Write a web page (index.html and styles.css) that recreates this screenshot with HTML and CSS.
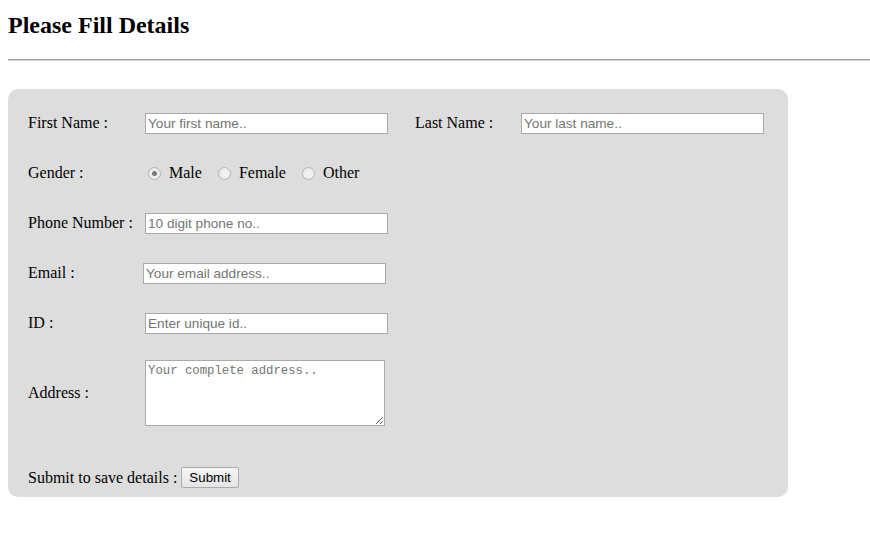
FILE: index.html
```html
<!DOCTYPE html>
<html>
<head>
<meta charset="utf-8">
<title>Please Fill Details</title>
<link rel="stylesheet" href="styles.css">
</head>
<body>
<header class="header">
  <h2 class="title">Please Fill Details</h2>
</header>
<hr class="rule">
<form class="panel">
  <div class="row">
    <label class="label">First Name :</label>
    <input class="field" type="text" placeholder="Your first name..">
    <label class="label label-last">Last Name :</label>
    <input class="field" type="text" placeholder="Your last name..">
  </div>
  <div class="row">
    <label class="label">Gender :</label>
    <div class="radios">
      <input class="radio" type="radio" name="g" checked><span class="rtext">Male</span>
      <input class="radio" type="radio" name="g"><span class="rtext">Female</span>
      <input class="radio" type="radio" name="g"><span class="rtext">Other</span>
    </div>
  </div>
  <div class="row">
    <label class="label">Phone Number :</label>
    <input class="field" type="text" placeholder="10 digit phone no..">
  </div>
  <div class="row">
    <label class="label">Email :</label>
    <input class="field field-email" type="text" placeholder="Your email address..">
  </div>
  <div class="row">
    <label class="label">ID :</label>
    <input class="field" type="text" placeholder="Enter unique id..">
  </div>
  <div class="row row-tall">
    <label class="label">Address :</label>
    <textarea class="area" placeholder="Your complete address.."></textarea>
  </div>
  <div class="row row-submit">
    <span class="submit-label">Submit to save details :</span>
    <button class="btn" type="button">Submit</button>
  </div>
</form>
</body>
</html>
```

FILE: styles.css
```css
body {
  margin: 0;
  font-family: "Liberation Serif", "Times New Roman", serif;
  font-size: 16px;
  color: #000;
  background: #fff;
}

.header {
  padding: 11px 0 0 8px;
}

.title {
  margin: 0;
  font-size: 24px;
  line-height: 28px;
  font-weight: bold;
}

.rule {
  margin: 20px 0 0 8px;
  height: 0;
  border: 0;
  border-top: 1px solid #9a9a9a;
  border-bottom: 1px solid #d8d8d8;
}

.panel {
  margin: 28px 0 0 8px;
  width: 780px;
  height: 408px;
  box-sizing: border-box;
  padding: 9px 0 0 20px;
  background: #dddddd;
  border-radius: 10px;
}

.row {
  display: flex;
  align-items: center;
  height: 50px;
}

.row-tall {
  height: 88px;
  padding-top: 2px;
  box-sizing: border-box;
}

.row-submit {
  margin-top: 22px;
  height: 39px;
}

.label {
  width: 117px;
  flex: none;
}

.label-last {
  width: 106px;
  margin-left: 27px;
}

.field {
  width: 243px;
  height: 21px;
  box-sizing: border-box;
  margin: 0;
  padding: 1px 2px;
  border: 1px solid #a9a9a9;
  background: #fff;
  font-family: "Liberation Sans", Arial, sans-serif;
  font-size: 13.6px;
  flex: none;
}

.field::placeholder,
.area::placeholder {
  color: #757575;
}

.field-email {
  margin-left: -2px;
}

.radios {
  display: flex;
  align-items: center;
}

.radio {
  appearance: none;
  -webkit-appearance: none;
  width: 13px;
  height: 13px;
  margin: 0 8px 0 3px;
  border: 1px solid #b4b4b4;
  border-radius: 50%;
  background: radial-gradient(circle, #f4f4f4 0, #e8e8e8 100%);
  box-sizing: border-box;
  position: relative;
  flex: none;
}

.radio:checked::after {
  content: "";
  position: absolute;
  left: 3px;
  top: 3px;
  width: 5px;
  height: 5px;
  border-radius: 50%;
  background: #7a7a7a;
}

.rtext {
  margin-right: 13px;
}

.area {
  width: 240px;
  height: 66px;
  box-sizing: border-box;
  margin: 0;
  padding: 3px 2px 2px;
  border: 1px solid #a9a9a9;
  background: #fff;
  font-family: "Liberation Mono", "Courier New", monospace;
  font-size: 12.3px;
  resize: both;
  flex: none;
}

.submit-label {
  margin-right: 4px;
}

.btn {
  height: 21px;
  margin: 0;
  padding: 1px 7px;
  border: 1px solid #ababab;
  border-radius: 2px;
  background: linear-gradient(#f6f6f6, #e4e4e4);
  font-family: "Liberation Sans", Arial, sans-serif;
  font-size: 13.33px;
  color: #000;
}
```
